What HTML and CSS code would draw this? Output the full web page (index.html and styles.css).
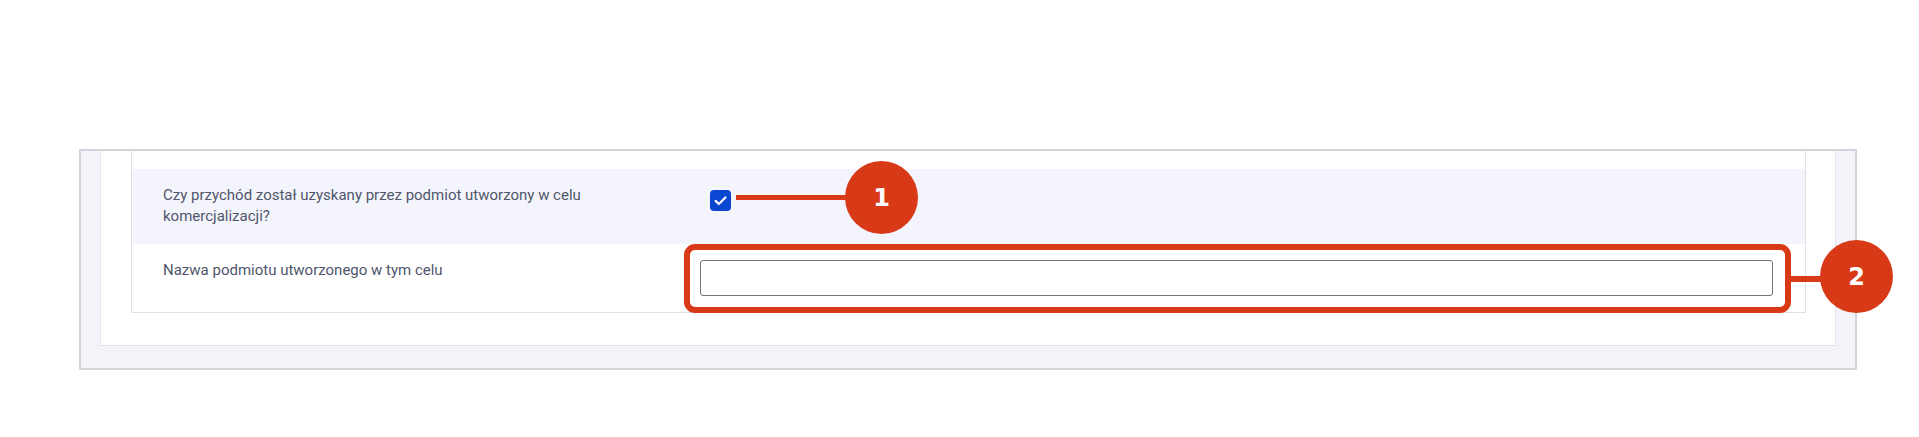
FILE: index.html
```html
<!DOCTYPE html>
<html lang="pl">
<head>
<meta charset="utf-8">
<title>Formularz</title>
<link rel="stylesheet" href="styles.css">
</head>
<body>
<div class="frame">
  <div class="panel">
    <div class="card">
      <div class="row-tail"></div>
      <div class="row row-alt">
        <div class="label">Czy przychód został uzyskany przez podmiot utworzony w celu<br>komercjalizacji?</div>
        <div class="value">
          <span class="checkbox" role="checkbox" aria-checked="true">
            <svg width="21" height="21" viewBox="0 0 21 21"><path d="M5.6 10.9 L8.9 14 L15.4 7.4" fill="none" stroke="#fff" stroke-width="2.2" stroke-linecap="round" stroke-linejoin="round"/></svg>
          </span>
        </div>
      </div>
      <div class="row">
        <div class="label">Nazwa podmiotu utworzonego w tym celu</div>
        <div class="value"><input class="text-input" type="text"></div>
      </div>
    </div>
  </div>
</div>

<div class="anno-line anno-line-1"></div>
<div class="anno-badge anno-badge-1">1</div>
<div class="anno-rect anno-rect-2"></div>
<div class="anno-line anno-line-2"></div>
<div class="anno-badge anno-badge-2">2</div>
</body>
</html>
```

FILE: styles.css
```css
html, body {
  margin: 0;
  padding: 0;
  background: #ffffff;
}
body {
  position: relative;
  width: 1919px;
  height: 437px;
  overflow: hidden;
  font-family: Roboto, "Liberation Sans", sans-serif;
}
.frame {
  box-sizing: border-box;
  margin: 149px 0 0 79px;
  width: 1778px;
  height: 221px;
  border: 2px solid #d3d4d9;
  background: #f3f4fa;
  padding: 0 19px 22px 19px;
  display: flex;
  flex-direction: column;
  justify-content: flex-end;
  overflow: hidden;
}
.panel {
  background: #ffffff;
  border: 1px solid #e1e2ea;
  border-top: none;
  padding: 0 29px 32px 30px;
}
.card {
  border: 1px solid #dfe0e8;
  border-top: none;
  background: #ffffff;
}
.row-tail {
  height: 18px;
}
.row {
  display: grid;
  grid-template-columns: 1fr 2fr;
  padding: 16px 32px 16px 31px;
  font-size: 15px;
  line-height: 21px;
  color: #50566b;
}
.row-alt {
  background: #f4f5fc;
  padding-bottom: 17px;
}
.value {
  display: flex;
  align-items: flex-start;
}
.checkbox {
  display: block;
  width: 21px;
  height: 21px;
  margin: 5px 0 0 10px;
  border-radius: 4px;
  background: #0b46d3;
}
.checkbox svg {
  display: block;
}
.text-input {
  box-sizing: border-box;
  width: 100%;
  height: 36px;
  margin: 0;
  border: 1px solid #72727f;
  border-radius: 3px;
  background: #ffffff;
  font: inherit;
  padding: 0 10px;
}

/* annotations overlay */
.anno-line {
  position: absolute;
  background: #d83a17;
}
.anno-line-1 {
  left: 736px;
  top: 195px;
  width: 112px;
  height: 5px;
}
.anno-line-2 {
  left: 1789px;
  top: 276px;
  width: 34px;
  height: 6px;
}
.anno-badge {
  position: absolute;
  width: 73px;
  height: 73px;
  border-radius: 50%;
  background: #d83a17;
  color: #ffffff;
  font-family: "DejaVu Sans", sans-serif;
  font-weight: 700;
  font-size: 24px;
  display: flex;
  align-items: center;
  justify-content: center;
}
.anno-badge-1 {
  left: 845px;
  top: 161px;
}
.anno-badge-2 {
  left: 1820px;
  top: 240px;
}
.anno-rect {
  position: absolute;
  box-sizing: border-box;
  border: 6px solid #d83a17;
  border-radius: 11px;
}
.anno-rect-2 {
  left: 684px;
  top: 244px;
  width: 1107px;
  height: 69px;
}
```
